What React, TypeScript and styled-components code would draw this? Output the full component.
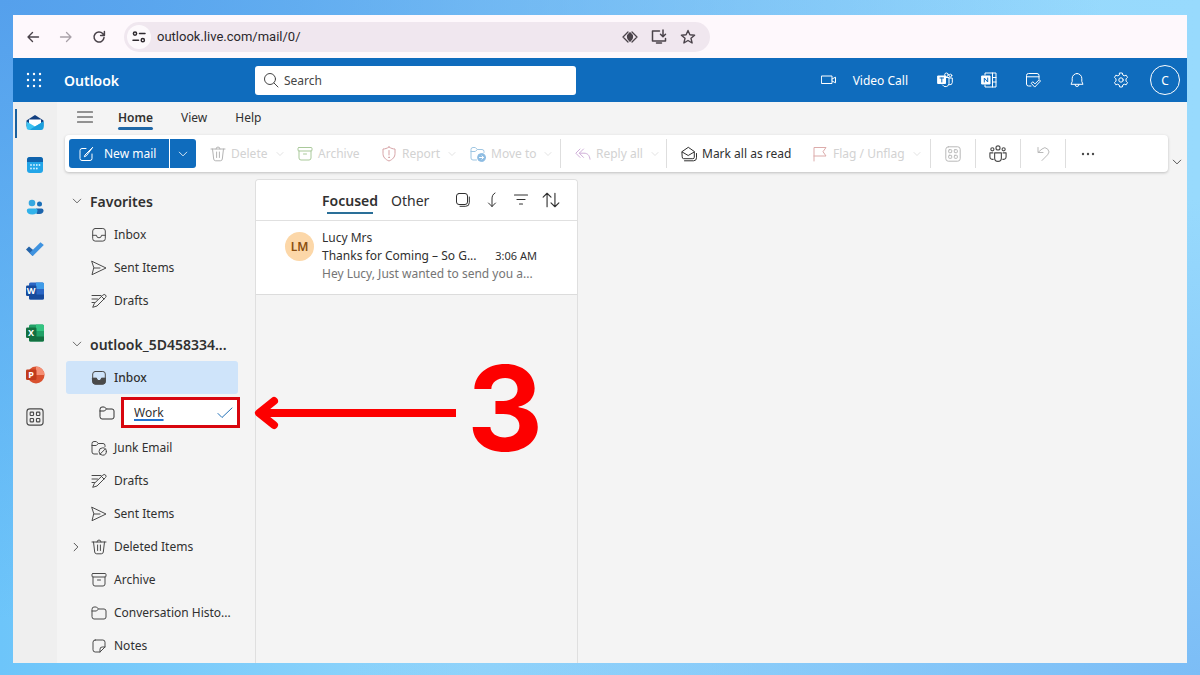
import React from "react";
import styled, { createGlobalStyle, css } from "styled-components";

const GlobalStyle = createGlobalStyle`
  *, *::before, *::after { box-sizing: border-box; }
  body { margin: 0; font-family: "Noto Sans", "Open Sans", sans-serif; font-size: 12px; color: #303030; }
  button, input { font: inherit; color: inherit; }
  button { border: 0; padding: 0; background: none; display: inline-flex; align-items: center; }
  svg { display: block; flex: none; }
`;

/* ---------- icons ---------- */

type IconProps = { size?: number; width?: number; children: React.ReactNode; color?: string };

const Svg = ({ size = 16, width = 1, color = "currentColor", children }: IconProps) => (
  <svg width={size} height={size} viewBox="0 0 16 16" fill="none" stroke={color} strokeWidth={width}
    strokeLinecap="round" strokeLinejoin="round" aria-hidden="true">{children}</svg>
);

const ChevronDown = ({ size = 10 }: { size?: number }) => <Svg size={size} width={1.3}><path d="M2 5l6 6 6-6" /></Svg>;
const ChevronRight = () => <Svg size={10} width={1.3}><path d="M5 2l6 6-6 6" /></Svg>;
const BackIcon = () => <Svg width={1.4}><path d="M13.5 8H3M7.500 3.500L3 8l4.500 4.500" /></Svg>;
const ForwardIcon = () => <Svg width={1.3} color="#a9a1a8"><path d="M2.500 8H13M8.500 3.500L13 8l-4.500 4.500" /></Svg>;
const ReloadIcon = () => <Svg width={1.5}><path d="M13 8.6A5 5 0 1 1 11.7 4.6L13.3 6.2M13.4 2.6v3.8H9.6" /></Svg>;
const TuneIcon = () => (
  <Svg width={1.5}><circle cx="4" cy="4.6" r="1.6" /><path d="M8.500 4.600H14M2 11.200h5.500" /><circle cx="11.800" cy="11.200" r="1.600" /></Svg>
);
const EyeIcon = () => (
  <Svg width={1.300}>
    <path d="M6 3L1 8l5 5M10 3l5 5-5 5" /><path d="M8 3.800C6.500 5 5.500 6.500 5.500 8s1 3 2.500 4.200c1.500-1.200 2.500-2.700 2.500-4.200S9.500 5 8 3.800z" fill="currentColor" />
  </Svg>
);
const InstallIcon = () => <Svg width={1.500}><path d="M8.500 2H1.500v10h13v-2.500M5.500 14h5M12 1v6.500M9.500 5.200L12 7.700l2.500-2.500" /></Svg>;
const StarIcon = () => <Svg width={1.400}><path d="M8 1.500l1.900 4.300 4.700.4-3.600 3.100 1.100 4.700L8 11.500 3.900 14 5 9.300 1.400 6.200l4.700-.4z" /></Svg>;
const WaffleIcon = () => (
  <Svg><g fill="currentColor" stroke="none">{[2, 8, 14].flatMap((y) => [2, 8, 14].map((x) => <circle key={`${x}-${y}`} cx={x} cy={y} r="1.200" />))}</g></Svg>
);
const SearchIcon = () => <Svg><circle cx="7" cy="7" r="5.500" /><path d="M11 11l4 4" /></Svg>;
const VideoIcon = () => <Svg><rect x=".8" y="4" width="10.200" height="7.500" /><path d="M11 7l3.500-1.800v5.600L11 9" /></Svg>;
const TeamsIcon = () => (
  <Svg>
    <circle cx="9.500" cy="2.800" r="1.800" /><circle cx="13.500" cy="3.500" r="1.300" />
    <path d="M9 5.500h3v6a3.500 3.500 0 0 1-6.500 1.500M12 6h3.300v4.500a2.500 2.500 0 0 1-3 2.300" />
    <rect x="1" y="4" width="7.500" height="7.500" fill="#fff" /><path d="M3 6h3.600M4.800 6v4" stroke="#0f6cbd" width="1.400" />
  </Svg>
);
const OneNoteIcon = () => (
  <Svg>
    <path d="M4 3V1h11v14H4v-2M11.500 1v14M11.500 5.500H15M11.500 10H15" />
    <rect x="1" y="4" width="8" height="8" fill="#fff" /><path d="M3.300 10V6l3.400 4V6" stroke="#0f6cbd" />
  </Svg>
);
const MyDayIcon = () => (
  <Svg><path d="M6 14H3.500A2 2 0 0 1 1.500 12V3.500A2 2 0 0 1 3.500 1.500h8.500A2 2 0 0 1 14 3.500V7M1.500 4.800H14M6.500 11l1.300-1.300 2.200 2.200L14.200 7.700l1.300 1.300L10 14.800z" /></Svg>
);
const BellIcon = () => <Svg><path d="M8 1.500A4.800 4.800 0 0 0 3.200 6.300V9.500L2 12.300h12L12.800 9.500V6.300A4.800 4.800 0 0 0 8 1.500zM6 12.500a2 2 0 0 0 4 0" /></Svg>;
const GearIcon = () => (
  <Svg>
    <circle cx="8" cy="8" r="2.200" />
    <path d="M6.700 1h2.600l.5 2 1.400.8 2-.6 1.300 2.200L13 6.900v2.200l1.500 1.500-1.300 2.200-2-.6-1.400.8-.5 2H6.700l-.5-2-1.400-.8-2 .6-1.300-2.200L3 9.100V6.900L1.500 5.400l1.300-2.200 2 .6L6.200 3z" />
  </Svg>
);
const MenuIcon = () => <Svg width={1.100}><path d="M.5 3h15M.5 8h15M.5 13h15" /></Svg>;
const ComposeIcon = () => <Svg><path d="M8 2.500H4A2 2 0 0 0 2 4.500v8A2 2 0 0 0 4 14.500h8a2 2 0 0 0 2-2V8M14.500 1.500L7 9l-.7 1.800L8 10z" /></Svg>;
const TrashIcon = () => <Svg><path d="M1 3h14M6 3a2 2 0 0 1 4 0M2.500 3l1.200 10a2 2 0 0 0 2 1.800h4.600a2 2 0 0 0 2-1.800L13.500 3M6.600 6v5.500M9.400 6v5.500" /></Svg>;
const ArchiveIcon = ({ color }: { color?: string }) => <Svg color={color}><rect x="1" y="1.500" width="14" height="3.500" rx="1" /><path d="M2 5v7a2 2 0 0 0 2 2h8a2 2 0 0 0 2-2V5M6.500 8h3" /></Svg>;
const ReportIcon = () => <Svg color="#d6a3a6"><path d="M8 1c2 1.400 4 2 6 2v4.500c0 3.500-2.300 6-6 7.500-3.700-1.500-6-4-6-7.500V3c2 0 4-.6 6-2zM8 4.500v4.500" /><circle cx="8" cy="11.300" r=".4" /></Svg>;
const folderPath = "M1 4A2 2 0 0 1 3 2h2.500L7.500 4H13a2 2 0 0 1 2 2v6a2 2 0 0 1-2 2H3a2 2 0 0 1-2-2zM1 6h4.500L7.500 4";
const partFolderPath = "M6.500 14H3a2 2 0 0 1-2-2V3.500A2 2 0 0 1 3 1.500h2.300L7.300 3.500H12a2 2 0 0 1 2 2V6.500M1 5.500h4.300L7.300 3.500";
const FolderIcon = () => <Svg><path d={folderPath} /></Svg>;
const MoveIcon = () => (
  <Svg color="#9fc6e2">
    <path d={partFolderPath} />
    <circle cx="11.500" cy="11.500" r="3.900" fill="#8dbce2" stroke="#8dbce2" /><path d="M9.500 11.500h3.800M12 9.900l1.600 1.600-1.600 1.600" stroke="#fff" />
  </Svg>
);
const JunkIcon = () => (
  <Svg><path d={partFolderPath} /><circle cx="11.700" cy="11.500" r="3.700" /><path d="M9.100 14.100l5.200-5.200" /></Svg>
);
const ReplyAllIcon = () => <Svg color="#cfaed8"><path d="M5 3L.8 7.200 5 11.400M8.500 3L4.300 7.200l4.200 4.200M4.500 7.200H9c3.500 0 5.500 2 6 6" /></Svg>;
const MarkReadIcon = () => <Svg><path d="M1.200 5.500L7.300 1.300l6 4.200v5.700a1.500 1.500 0 0 1-1.500 1.500H2.700a1.500 1.500 0 0 1-1.500-1.500zM1.200 6l6 3.500 6-3.500M3.500 14.800h9a3 3 0 0 0 3-3V7.500" /></Svg>;
const FlagIcon = () => <Svg color="#dcabaa"><path d="M2 15V1.500h12L11 5.700l3 4.300H2" /></Svg>;
const AppsIcon = ({ size }: { size?: number }) => (
  <Svg size={size}><rect x=".8" y=".8" width="14.400" height="14.400" rx="2.500" /><rect x="3.700" y="3.700" width="3" height="3" rx=".6" /><rect x="9.300" y="3.700" width="3" height="3" rx=".6" /><rect x="3.700" y="9.300" width="3" height="3" rx=".6" /><rect x="9.300" y="9.300" width="3" height="3" rx=".6" /></Svg>
);
const PeopleIcon = () => (
  <Svg size={18}>
    <circle cx="8" cy="2.600" r="1.800" /><circle cx="3" cy="3.800" r="1.400" /><circle cx="13" cy="3.800" r="1.400" />
    <path d="M5 7h6v4.500a3 3 0 0 1-6 0zM3.500 7H.8v3.500a2.300 2.300 0 0 0 3 2.200M12.500 7h2.700v3.500a2.300 2.300 0 0 1-3 2.200" />
  </Svg>
);
const UndoIcon = () => <Svg><path d="M3 1.500V6.500H8M3.200 6.300L7 3a4 4 0 0 1 5.600 5.800L7 14.500" /></Svg>;
const MoreIcon = () => <Svg><g fill="currentColor" stroke="none"><circle cx="3" cy="8" r="1.200" /><circle cx="8" cy="8" r="1.200" /><circle cx="13" cy="8" r="1.200" /></g></Svg>;
const InboxIcon = ({ filled = false }: { filled?: boolean }) => (
  <Svg>
    <rect x="1.700" y="1.500" width="12.600" height="12.600" rx="2.500" />
    <path d="M1.700 8.300h3.800a2.500 2.500 0 0 0 5 0h3.800v3.300a2.500 2.500 0 0 1-2.500 2.500H4.200a2.500 2.500 0 0 1-2.500-2.500z" fill={filled ? "currentColor" : "none"} stroke={filled ? "currentColor" : "none"} />
    <path d="M1.700 8.300h3.800a2.500 2.500 0 0 0 5 0h3.800" />
  </Svg>
);
const SendIcon = () => <Svg><path d="M1 1.300L15 8 1 14.700 2.700 8zM2.700 8H9" /></Svg>;
const DraftIcon = () => <Svg><path d="M1 2.500h9M1 6h5.500M1 9.500h2.500M12 2a1.700 1.700 0 0 1 2.500 2.500L6 13l-4.300 1.300L3.200 10.700zM10.500 3.500L13 6" /></Svg>;
const NoteIcon = () => <Svg><path d="M4.200 2h7.600A2.200 2.200 0 0 1 14 4.200V9l-5 5H4.200A2.200 2.200 0 0 1 2 11.800V4.200A2.200 2.200 0 0 1 4.200 2zM9 14v-2.800A2.200 2.200 0 0 1 11.200 9H14" /></Svg>;
const CheckIcon = () => <Svg><path d="M1 8.500l4 4L15 3" /></Svg>;
const SelectIcon = () => <Svg><rect x="1.500" y="1.500" width="11" height="11" rx="2.500" /><path d="M5 14.300h5.700a3.600 3.600 0 0 0 3.600-3.600V5" /></Svg>;
const JumpIcon = () => <Svg><path d="M11 1C8.700 2.300 8 4.300 8 7v7.500M4.500 11L8 14.500 11.500 11" /></Svg>;
const FilterIcon = () => <Svg width={1.200}><path d="M1.500 3h13M4 7.500h8M6.500 12h3" /></Svg>;
const SortIcon = () => <Svg size={18}><path d="M4.500 14V2M1 5.500L4.500 2 8 5.500M11.500 2v12M8 10.500l3.500 3.500 3.500-3.500" /></Svg>;

const MailApp = () => (
  <svg width="18" height="18" viewBox="0 0 18 18" aria-hidden="true">
    <path d="M.5 6.500L9 1l8.500 5.500v6H.5z" fill="#123f80" /><path d="M3 5.500h12v5L9 14l-6-3.500z" fill="#fff" />
    <path d="M.5 7.500L9 12.500l8.500-5V13a3 3 0 0 1-3 3h-11a3 3 0 0 1-3-3z" fill="#3cc3f2" /><path d="M6 14.300l11.500-6.800V13a3 3 0 0 1-3 3H4z" fill="#1c9fdd" />
  </svg>
);
const CalendarApp = () => (
  <svg width="18" height="18" viewBox="0 0 18 18" aria-hidden="true">
    <rect x="1" y="1" width="16" height="16" rx="3" fill="#22a5e8" /><path d="M1 6V4a3 3 0 0 1 3-3h10a3 3 0 0 1 3 3v2z" fill="#0f62ac" />
    <g fill="#d6f1ff"><circle cx="8" cy="9" r=".9" /><circle cx="10.800" cy="9" r=".9" /><circle cx="13.500" cy="9" r=".9" /><circle cx="5" cy="9" r=".9" /><circle cx="5" cy="12.500" r=".9" /><circle cx="8" cy="12.500" r=".9" /><circle cx="10.800" cy="12.500" r=".9" /></g>
  </svg>
);
const PeopleApp = () => (
  <svg width="18" height="18" viewBox="0 0 18 18" aria-hidden="true">
    <circle cx="6" cy="5" r="3.300" fill="#36a7e0" /><circle cx="13.500" cy="6" r="2.500" fill="#1a6fb8" />
    <path d="M10 10.500h5.500a2 2 0 0 1 2 2c0 2-1.500 3.500-4 3.500h-3z" fill="#1c64ac" /><path d="M.8 12.500a2 2 0 0 1 2-2h6.700a2 2 0 0 1 2 2c0 2.500-2 4-5.300 4S.8 15 .8 12.500z" fill="#31b2ea" />
  </svg>
);
const TodoApp = () => (
  <svg width="18" height="18" viewBox="0 0 18 18" aria-hidden="true"><path d="M0 9.500L3 6.500l6.500 5.500-3 4z" fill="#2463a8" /><path d="M3.700 13L14.500 2.200l3.300 2.800L6.800 16z" fill="#3f93e0" /></svg>
);
const OfficeTile = ({ letter, dark, mid, light, round }: { letter: string; dark: string; mid: string; light: string; round?: boolean }) => (
  <svg width="20" height="18" viewBox="0 0 20 18" aria-hidden="true">
    {round
      ? <><circle cx="11" cy="9" r="8.500" fill={mid} /><path d="M11 .5A8.500 8.500 0 0 1 19.500 9H11z" fill={light} /></>
      : <><rect x="4" y=".5" width="15" height="17" rx="1.500" fill={mid} /><path d="M11 .5h6.500A1.500 1.500 0 0 1 19 2v5h-8z" fill={light} /><path d="M4 12.500h15V16a1.500 1.500 0 0 1-1.500 1.500h-12A1.500 1.500 0 0 1 4 16z" fill={dark} /></>}
    <rect x="1" y="3.500" width="10.500" height="10.500" rx="1.300" fill={dark} />
    <text x="6" y="12" textAnchor="middle" fontSize="9" fontWeight="700" fill="#fff" fontFamily="Noto Sans, sans-serif">{letter}</text>
  </svg>
);

/* ---------- page shell ---------- */

const Desktop = styled.div`
  height: 100vh;
  padding: 15px 13px 12px;
  background:
    radial-gradient(at 100% 100%, #7cbdf6 0%, rgba(124, 189, 246, 0) 50%),
    radial-gradient(at 0% 0%, #55a0ec 0%, rgba(85, 160, 236, 0) 65%),
    linear-gradient(90deg, #6dc5fa 0%, #93d6fb 40%, #98dafd 100%);
`;
const Window = styled.div`height: 100%; display: flex; flex-direction: column; background: #f4f4f4; overflow: hidden;`;

const BrowserBar = styled.div`
  flex: none; height: 43px; display: flex; align-items: center; background: #fef8fc; color: #4a434a; padding-left: 12px;
`;
const NavButton = styled.button`width: 33px; justify-content: flex-start;`;
const Address = styled.div`
  width: calc(50% + 5px); height: 30px; border-radius: 15px; background: #f0e7ef; display: flex; align-items: center; gap: 13px; padding: 0 14px 0 3px;
`;
const SiteInfo = styled.button`width: 24px; height: 24px; border-radius: 12px; background: #fdf9fc; justify-content: center; color: #2f2a2f;`;
const Url = styled.input`flex: 1; min-width: 0; border: 0; padding: 0; margin-left: -7px; background: none; font-family: Roboto, sans-serif; font-size: 13px; color: #2c282c;`;

const Header = styled.header`
  flex: none; height: 44px; display: flex; align-items: center; background: #0f6cbd; color: #fff; padding: 0 7px 0 13px;
`;
const HeaderLead = styled.div`width: 229px; display: flex; align-items: center; gap: 22px;`;
const Brand = styled.span`font-size: 14px; font-weight: 600;`;
const SearchBox = styled.label`
  width: 321px; height: 29px; border-radius: 3px; background: #fff; color: #454545; display: flex; align-items: center; gap: 5px; padding: 0 8px;
  input { flex: 1; min-width: 0; border: 0; padding: 0; background: none; }
  input::placeholder { color: #454545; opacity: 1; }
`;
const HeaderTools = styled.div`margin-left: auto; display: flex; align-items: center;`;
const HeaderButton = styled.button`width: 44px; height: 44px; justify-content: center;`;
const VideoCall = styled.button`gap: 16px; margin-right: 15px;`;
const Avatar = styled.button`width: 30px; height: 30px; border: 1px solid #fff; border-radius: 50%; justify-content: center; margin-left: 7px;`;

const Body = styled.div`flex: 1; min-height: 0; display: flex;`;
const Rail = styled.nav`flex: none; width: 44px; background: #efefef; display: flex; flex-direction: column;`;
const RailButton = styled.button<{ $active?: boolean }>`
  position: relative; height: 42px; justify-content: center; color: #4a4a4a;
  ${(p) => p.$active && css`&::before { content: ""; position: absolute; left: 2px; top: 7px; bottom: 6px; width: 2px; background: #19609f; }`}
`;
const Main = styled.main`flex: 1; min-width: 0; display: flex; flex-direction: column;`;

/* ---------- ribbon ---------- */

const TabRow = styled.div`flex: none; height: 33px; display: flex; padding-left: 20px;`;
const MenuButton = styled.button`width: 41px; height: 30px;`;
const Tab = styled.button<{ $active?: boolean }>`
  position: relative; height: 30px; margin-right: 28px; font-weight: ${(p) => (p.$active ? 600 : 400)};
  ${(p) => p.$active && css`&::after { content: ""; position: absolute; left: 0; right: 0; bottom: 2px; height: 3px; border-radius: 2px; background: #1f68a8; }`}
`;
const RibbonRow = styled.div`flex: none; display: flex; align-items: flex-end; padding: 0 5px 0 8px; gap: 4px;`;
const Ribbon = styled.div`
  flex: 1; min-width: 0; height: 37px; display: flex; align-items: center; padding-left: 4px; background: #fff; border-radius: 4px; box-shadow: 0 1px 3px rgba(0, 0, 0, 0.22);
`;
const Expand = styled.button`width: 10px; height: 20px;`;
const Split = styled.div`display: flex; gap: 1px; height: 29px; margin-right: 14px; color: #fff;`;
const NewMail = styled.button`width: 100px; gap: 10px; padding-left: 9px; background: #0f6cbd; border-radius: 3px 0 0 3px; white-space: nowrap;`;
const NewMailMore = styled.button`width: 26px; justify-content: center; background: #0f6cbd; border-radius: 0 3px 3px 0;`;
const Command = styled.button<{ $width: number; $off?: boolean }>`
  flex: none; width: ${(p) => p.$width}px; gap: 5px; white-space: nowrap; color: ${(p) => (p.$off ? "#d2d2d2" : "#303030")};
  > svg:first-child { color: ${(p) => (p.$off ? "#b4b4b4" : "#303030")}; }
  > svg:nth-of-type(2) { margin-left: 3px; }
`;
const Divider = styled.span`width: 1px; height: 29px; background: #dedede; margin-right: 14px;`;
const IconCommand = styled.button<{ $off?: boolean }>`
  width: 45px; height: 29px; justify-content: center; border-left: 1px solid #dedede; color: ${(p) => (p.$off ? "#b9b9b9" : "#4a4a4a")};
`;

/* ---------- folder pane ---------- */

const Panes = styled.div`flex: 1; min-height: 0; display: flex;`;
const Folders = styled.nav`
  position: relative; z-index: 1; flex: none; width: 198px; padding: 12px 17px 0 9px;
  button > svg { color: #4a4a4a; }
`;
const Group = styled.section`margin-bottom: 10px;`;
const GroupHead = styled.button`width: 100%; height: 34px; gap: 8px; padding-left: 6px; font-size: 14px; font-weight: 600; white-space: nowrap;`;
const Folder = styled.button<{ $active?: boolean; $nested?: boolean }>`
  width: 100%; height: 33px; gap: 7px; padding-left: ${(p) => (p.$nested ? 5 : 25)}px; border-radius: 3px; white-space: nowrap; text-align: left;
  ${(p) => p.$active && css`background: #cfe4fa; font-weight: 500;`}
`;
const Twisty = styled.span`width: 13px; display: flex;`;
const RenameRow = styled.div`position: relative; height: 37px; display: flex; align-items: center; gap: 6px; padding-left: 33px; margin-right: -2px;`;
const RenameBox = styled.div`
  flex: 1; min-width: 0; height: 31px; border: 3px solid #d8060e; background: #fff; display: flex; align-items: center; padding: 0 4px 0 10px;
  input { flex: 1; min-width: 0; height: 24px; border: 0; padding: 0; background: none; text-decoration: underline 2px #2372d0; text-underline-offset: 2px; }
  button > svg { color: #2372b8; }
`;
const Callout = styled.div`position: absolute; left: calc(100% + 14px); top: 50%; transform: translateY(-50%); display: flex; align-items: center; gap: 11px; color: #fd0000; pointer-events: none;`;
const Step = styled.span`font-family: Inter, sans-serif; font-size: 118px; line-height: 118px; font-weight: 700; padding-bottom: 10px;`;

/* ---------- message list ---------- */

const MessageList = styled.section`
  flex: none; width: 323px; margin-top: 7px; border: 1px solid #dfdfdf; border-bottom: 0; border-radius: 4px 4px 0 0; overflow: hidden;
`;
const ListHead = styled.div`height: 41px; display: flex; align-items: center; background: #fff; padding-left: 66px; border-bottom: 1px solid #e0e0e0;`;
const ListTab = styled.button<{ $active?: boolean }>`
  position: relative; height: 28px; margin-right: 13px; font-size: 14px; font-weight: ${(p) => (p.$active ? 600 : 400)};
  ${(p) => p.$active && css`&::after { content: ""; position: absolute; left: 5px; right: 5px; bottom: 0; height: 2px; background: #2a6f98; }`}
`;
const ListTools = styled.div`display: flex; align-items: center; gap: 13px; margin-left: 13px;`;
const Message = styled.article`display: grid; grid-template-columns: 29px 1fr; column-gap: 8px; padding: 8px 40px 11px 29px; background: #fff; border-bottom: 1px solid #dcdcdc; line-height: 18px;`;
const Badge = styled.span`width: 29px; height: 29px; margin-top: 3px; border-radius: 50%; background: #fcd7a8; color: #8a4f10; display: flex; align-items: center; justify-content: center; font-weight: 600;`;
const MessageText = styled.div`min-width: 0;`;
const SubjectLine = styled.div`display: flex; justify-content: space-between; white-space: nowrap; time { font-size: 11px; }`;
const Preview = styled.div`color: #757575; white-space: nowrap;`;

const favorites = [
  { label: "Inbox", icon: <InboxIcon /> },
  { label: "Sent Items", icon: <SendIcon /> },
  { label: "Drafts", icon: <DraftIcon /> },
];
const folders = [
  { label: "Junk Email", icon: <JunkIcon /> },
  { label: "Drafts", icon: <DraftIcon /> },
  { label: "Sent Items", icon: <SendIcon /> },
  { label: "Deleted Items", icon: <TrashIcon />, nested: true },
  { label: "Archive", icon: <ArchiveIcon /> },
  { label: "Conversation Histo...", icon: <FolderIcon /> },
  { label: "Notes", icon: <NoteIcon /> },
];

export default function App() {
  return (
    <Desktop>
      <GlobalStyle />
      <Window>
        <BrowserBar>
          <NavButton aria-label="Back"><BackIcon /></NavButton>
          <NavButton aria-label="Forward"><ForwardIcon /></NavButton>
          <NavButton aria-label="Reload"><ReloadIcon /></NavButton>
          <Address>
            <SiteInfo aria-label="Site information"><TuneIcon /></SiteInfo>
            <Url aria-label="Address" defaultValue="outlook.live.com/mail/0/" />
            <button aria-label="Preview"><EyeIcon /></button>
            <button aria-label="Install"><InstallIcon /></button>
            <button aria-label="Bookmark"><StarIcon /></button>
          </Address>
        </BrowserBar>
        <Header>
          <HeaderLead>
            <button aria-label="App launcher"><WaffleIcon /></button>
            <Brand>Outlook</Brand>
          </HeaderLead>
          <SearchBox><SearchIcon /><input aria-label="Search" placeholder="Search" /></SearchBox>
          <HeaderTools>
            <VideoCall><VideoIcon />Video Call</VideoCall>
            <HeaderButton aria-label="Teams"><TeamsIcon /></HeaderButton>
            <HeaderButton aria-label="OneNote"><OneNoteIcon /></HeaderButton>
            <HeaderButton aria-label="My Day"><MyDayIcon /></HeaderButton>
            <HeaderButton aria-label="Notifications"><BellIcon /></HeaderButton>
            <HeaderButton aria-label="Settings"><GearIcon /></HeaderButton>
            <Avatar aria-label="Account">C</Avatar>
          </HeaderTools>
        </Header>
        <Body>
          <Rail>
            <RailButton $active aria-label="Mail"><MailApp /></RailButton>
            <RailButton aria-label="Calendar"><CalendarApp /></RailButton>
            <RailButton aria-label="People"><PeopleApp /></RailButton>
            <RailButton aria-label="To Do"><TodoApp /></RailButton>
            <RailButton aria-label="Word"><OfficeTile letter="W" dark="#174a9c" mid="#2b66c4" light="#3f9be8" /></RailButton>
            <RailButton aria-label="Excel"><OfficeTile letter="X" dark="#137040" mid="#21a066" light="#33c481" /></RailButton>
            <RailButton aria-label="PowerPoint"><OfficeTile round letter="P" dark="#c13b1b" mid="#d9512f" light="#f58f74" /></RailButton>
            <RailButton aria-label="More apps"><AppsIcon size={18} /></RailButton>
          </Rail>
          <Main>
            <TabRow>
              <MenuButton aria-label="Menu"><MenuIcon /></MenuButton>
              <Tab $active>Home</Tab><Tab>View</Tab><Tab>Help</Tab>
            </TabRow>
            <RibbonRow>
              <Ribbon>
                <Split>
                  <NewMail><ComposeIcon />New mail</NewMail>
                  <NewMailMore aria-label="New mail options"><ChevronDown /></NewMailMore>
                </Split>
                <Command $width={87} $off><TrashIcon />Delete<ChevronDown size={8} /></Command>
                <Command $width={84} $off><ArchiveIcon color="#a9c99a" />Archive</Command>
                <Command $width={89} $off><ReportIcon />Report<ChevronDown size={8} /></Command>
                <Command $width={90} $off><MoveIcon />Move to<ChevronDown size={8} /></Command>
                <Divider />
                <Command $width={91} $off><ReplyAllIcon />Reply all<ChevronDown size={8} /></Command>
                <Divider />
                <Command $width={131}><MarkReadIcon />Mark all as read</Command>
                <Command $width={118} $off><FlagIcon />Flag / Unflag<ChevronDown size={8} /></Command>
                <IconCommand $off aria-label="Categorize"><AppsIcon /></IconCommand>
                <IconCommand aria-label="Discover groups"><PeopleIcon /></IconCommand>
                <IconCommand $off aria-label="Undo"><UndoIcon /></IconCommand>
                <IconCommand aria-label="More options"><MoreIcon /></IconCommand>
              </Ribbon>
              <Expand aria-label="Ribbon options"><ChevronDown /></Expand>
            </RibbonRow>
            <Panes>
              <Folders>
                <Group>
                  <GroupHead><ChevronDown />Favorites</GroupHead>
                  {favorites.map((f) => <Folder key={f.label}>{f.icon}{f.label}</Folder>)}
                </Group>
                <Group>
                  <GroupHead><ChevronDown />outlook_5D458334...</GroupHead>
                  <Folder $active><InboxIcon filled />Inbox</Folder>
                  <RenameRow>
                    <FolderIcon />
                    <RenameBox><input aria-label="Folder name" defaultValue="Work" /><button aria-label="Save"><CheckIcon /></button></RenameBox>
                    <Callout>
                      <svg width="202" height="34" viewBox="0 0 202 34" fill="none" stroke="currentColor" strokeWidth="8" aria-hidden="true">
                        <path d="M8 17h194" /><path d="M20 5L5 17l15 12" strokeLinecap="round" strokeLinejoin="round" />
                      </svg>
                      <Step>3</Step>
                    </Callout>
                  </RenameRow>
                  {folders.map((f) => (
                    <Folder key={f.label} $nested={f.nested}>{f.nested && <Twisty><ChevronRight /></Twisty>}{f.icon}{f.label}</Folder>
                  ))}
                </Group>
              </Folders>
              <MessageList>
                <ListHead>
                  <ListTab $active>Focused</ListTab><ListTab>Other</ListTab>
                  <ListTools>
                    <button aria-label="Select"><SelectIcon /></button>
                    <button aria-label="Jump to"><JumpIcon /></button>
                    <button aria-label="Filter"><FilterIcon /></button>
                    <button aria-label="Sort"><SortIcon /></button>
                  </ListTools>
                </ListHead>
                <Message>
                  <Badge>LM</Badge>
                  <MessageText>
                    <div>Lucy Mrs</div>
                    <SubjectLine><span>Thanks for Coming – So G...</span><time>3:06 AM</time></SubjectLine>
                    <Preview>Hey Lucy, Just wanted to send you a...</Preview>
                  </MessageText>
                </Message>
              </MessageList>
            </Panes>
          </Main>
        </Body>
      </Window>
    </Desktop>
  );
}
